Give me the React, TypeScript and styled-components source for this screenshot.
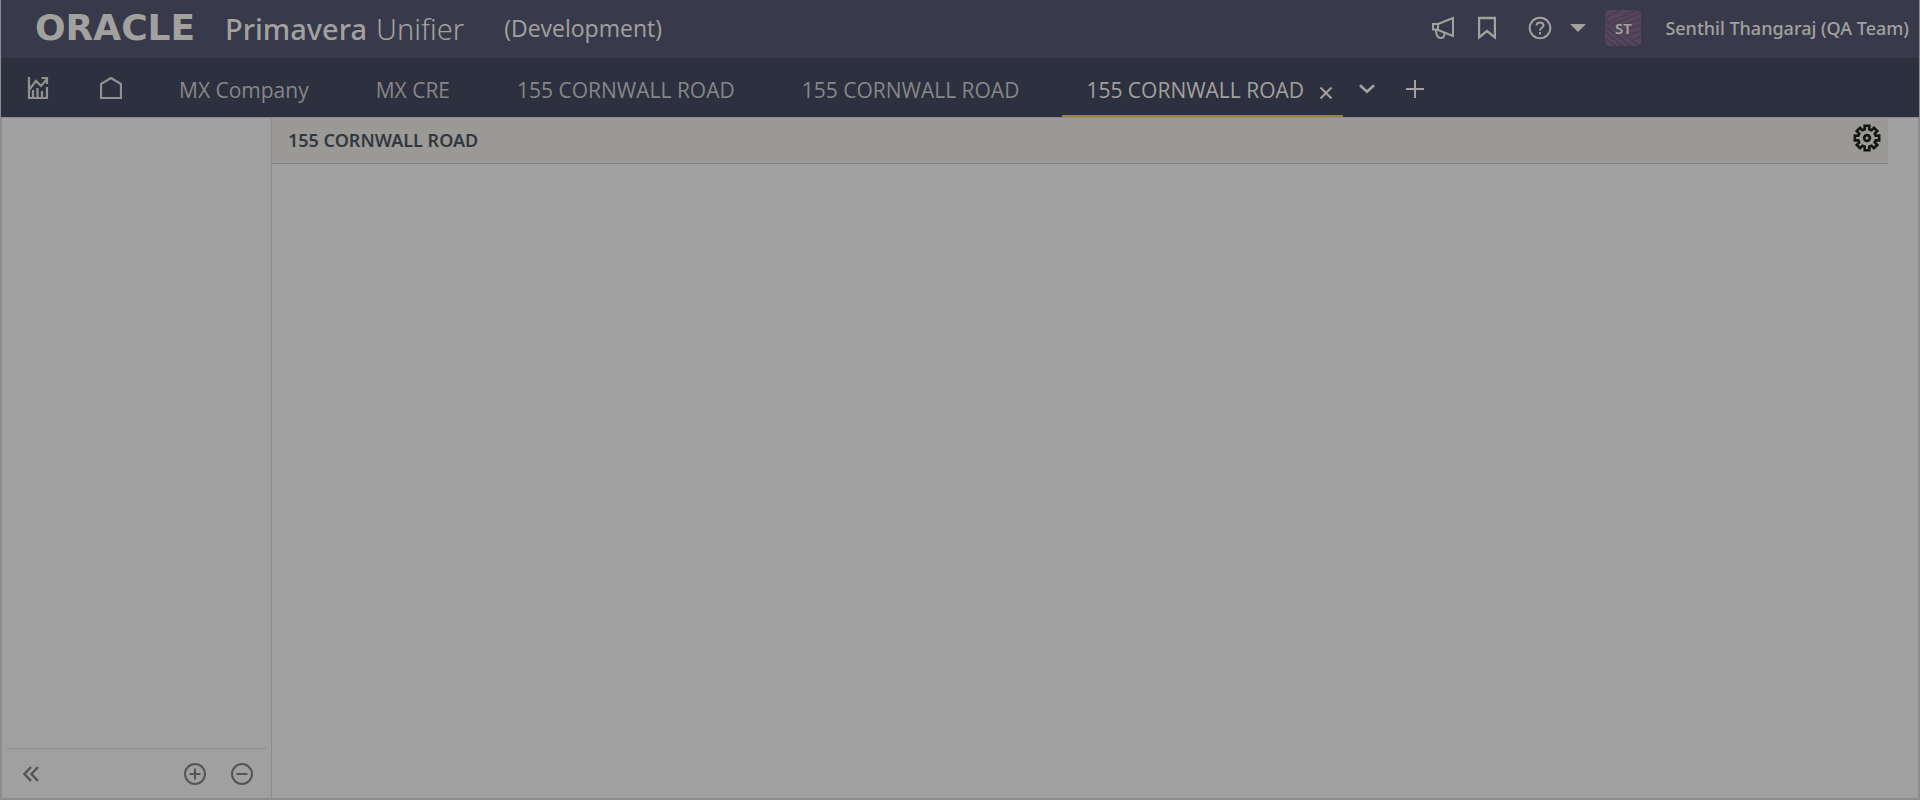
import React from "react";
import styled, { createGlobalStyle } from "styled-components";

const color = {
  frame: "#8c8c8c",
  header: "#383a4c",
  tabs: "#2d303f",
  surface: "#a0a0a0",
  titleBar: "#9b9996",
  titleLine: "#7d807e",
  line: "#8c8c8c",
  light: "#a3a19e",
  muted: "#868789",
  accent: "#9b7f45",
  ink: "#33383f",
  footerIcon: "#555555",
};

const GlobalStyle = createGlobalStyle`
  *, *::before, *::after { box-sizing: border-box; }
  body {
    margin: 0;
    background: ${color.surface};
    font-family: "Noto Sans", "Open Sans", sans-serif;
  }
`;

const Page = styled.div`
  display: flex;
  flex-direction: column;
  min-height: 100vh;
  border: 1px solid ${color.frame};
  border-top: 0;
`;

const Header = styled.header`
  display: flex;
  align-items: center;
  height: 58px;
  padding: 0 10px 2px 34px;
  background: ${color.header};
  color: ${color.light};
`;

const Brand = styled.div`
  display: flex;
  align-items: baseline;
  line-height: 40px;
  white-space: nowrap;
`;

const Wordmark = styled.span`
  width: 190px;
  font-family: "DejaVu Sans", sans-serif;
  font-size: 36px;
  font-weight: 700;
`;

const ProductName = styled.span`
  font-size: 29px;
  font-weight: 500;
`;

const ProductEdition = styled.span`
  margin-left: 9px;
  font-size: 29px;
  font-weight: 300;
`;

const Environment = styled.span`
  margin-left: 40px;
  font-family: "Open Sans", sans-serif;
  font-size: 23px;
  line-height: 32px;
`;

const HeaderTools = styled.div`
  display: flex;
  align-items: center;
  margin-left: auto;
  white-space: nowrap;
`;

const IconButton = styled.button<{ $width: number; $gap?: number }>`
  display: flex;
  align-items: center;
  justify-content: center;
  flex: none;
  width: ${(p) => p.$width}px;
  margin: 0 0 0 ${(p) => p.$gap ?? 0}px;
  padding: 0;
  border: 0;
  background: none;
  color: inherit;
  cursor: pointer;
`;

const Avatar = styled.div`
  display: grid;
  width: 36px;
  height: 36px;
  margin-left: 19px;
  border-radius: 5px;
  overflow: hidden;
  place-items: center;
  > * { grid-area: 1 / 1; }
`;

const Initials = styled.span`
  font-size: 15px;
  font-weight: 600;
  line-height: 20px;
`;

const UserName = styled.span`
  margin-left: 24px;
  font-size: 18px;
  font-weight: 500;
`;

const TabBar = styled.nav`
  display: flex;
  align-items: stretch;
  height: 59px;
  padding: 0 26px;
  background: ${color.tabs};
  color: ${color.light};
`;

const Shortcuts = styled.div`
  display: flex;
  align-items: center;
  margin-right: 33px;
  color: #92918f;
`;

const TabList = styled.div`
  display: flex;
  gap: 19px;
`;

const Tab = styled.div<{ $active?: boolean }>`
  display: flex;
  align-items: center;
  padding: 5px ${(p) => (p.$active ? 10 : 24)}px 0 24px;
  background: ${(p) =>
    p.$active ? `linear-gradient(${color.accent}, ${color.accent}) bottom / 100% 2px no-repeat` : "none"};
  color: ${(p) => (p.$active ? color.light : color.muted)};
`;

const TabLabel = styled.button`
  margin: 0;
  padding: 0;
  border: 0;
  background: none;
  color: inherit;
  font-family: "Open Sans", sans-serif;
  font-size: 21px;
  line-height: 28px;
  white-space: nowrap;
  cursor: pointer;
`;

const CloseButton = styled(IconButton)`
  padding-top: 6px;
`;

const TabAction = styled(IconButton)`
  padding-top: 2px;
`;

const Body = styled.div`
  display: flex;
  flex: 1;
  border: 1px solid ${color.frame};
  background: ${color.surface};
`;

const Sidebar = styled.aside`
  display: flex;
  flex: none;
  flex-direction: column;
  justify-content: flex-end;
  width: 270px;
  padding: 0 5px;
  border-right: 1px solid ${color.line};
`;

const SidebarFooter = styled.div`
  display: flex;
  align-items: center;
  height: 50px;
  padding: 0 13px 0 16px;
  border-top: 1px solid ${color.line};
  color: ${color.footerIcon};
`;

const Spacer = styled.div`
  flex: 1;
`;

const Main = styled.main`
  flex: 1;
  padding-right: 30px;
`;

const TitleBar = styled.div`
  display: flex;
  align-items: center;
  justify-content: space-between;
  height: 46px;
  padding: 0 7px 2px 16px;
  border-bottom: 1px solid ${color.titleLine};
  background: ${color.titleBar};
  color: ${color.ink};
`;

const Title = styled.h1`
  margin: 0;
  font-size: 18px;
  font-weight: 600;
  line-height: 24px;
`;

const GearButton = styled(IconButton)`
  padding-bottom: 4px;
  color: #141414;
`;

const Icon = styled.svg<{ $stroke?: number }>`
  display: block;
  flex: none;
  fill: none;
  stroke: currentColor;
  stroke-width: ${(p) => p.$stroke ?? 2};
`;

const gearOutline = (teeth: number, outer: number, inner: number) => {
  const step = (Math.PI * 2) / teeth;
  const point = (radius: number, angle: number) =>
    `${(14 + radius * Math.sin(angle)).toFixed(2)} ${(14 - radius * Math.cos(angle)).toFixed(2)}`;
  const points: string[] = [];
  for (let i = 0; i < teeth; i++) {
    const a = i * step;
    points.push(point(inner, a - 0.26), point(outer, a - 0.19), point(outer, a + 0.19), point(inner, a + 0.26));
  }
  return `M${points.join("L")}Z`;
};

const MegaphoneIcon = () => (
  <Icon width="24" height="24" viewBox="0 0 24 24">
    <path d="M22 2v18L7 14V8ZM7 8H2v5.500h5M5 13.500c0 5 1.500 8.500 5 8.500 2.500 0 3.500-2 3.500-5" />
  </Icon>
);

const BookmarkIcon = () => (
  <Icon width="18" height="24" viewBox="0 0 18 24" $stroke={2.4}>
    <path d="M1 2h16v19.500l-8-6.500-8 6.500Z" />
  </Icon>
);

const HelpIcon = () => (
  <Icon width="24" height="24" viewBox="0 0 24 24">
    <circle cx="12" cy="12" r="10.300" />
    <path d="M8.500 9.500C8.500 7.500 10 6.500 12 6.500s3.500 1.200 3.500 3c0 2.200-3.500 2.500-3.500 5M12 16v2.200" />
  </Icon>
);

const CaretIcon = () => (
  <Icon width="16" height="8" viewBox="0 0 16 8" $stroke={0}>
    <path d="M0 0h16L8 8Z" fill="currentColor" />
  </Icon>
);

const AvatarPattern = () => (
  <Icon width="36" height="36" viewBox="0 0 36 36">
    <path d="M0 0h36v36H0Z" fill="#57465b" stroke="none" />
    <path
      d="M0 8 16 0M0 14 36 -2M6 15 36 3M12 17 36 9M18 21 36 15M23 25 36 21M28 30 36 27M0 10 36 37M0 16 27 37M0 22 19 37M0 28 12 37"
      stroke="#4c3e51"
    />
  </Icon>
);

const ChartIcon = () => (
  <Icon width="22" height="24" viewBox="0 0 22 24" $stroke={2.2}>
    <path d="M2 1v21h19M2 14 9 5l5 5 6-7M14.500 2H20v6M6 21v-7M10.500 21v-9M15 21v-6M20 22V11" />
  </Icon>
);

const HomeIcon = () => (
  <Icon width="22" height="24" viewBox="0 0 22 24" $stroke={2.2}>
    <path d="M1 22V8l10-6 10 6v14Z" />
  </Icon>
);

const CloseIcon = () => (
  <Icon width="14" height="14" viewBox="0 0 14 14">
    <path d="m1.500 1.500 11 11M12.500 1.500l-11 11" />
  </Icon>
);

const ChevronIcon = () => (
  <Icon width="16" height="10" viewBox="0 0 16 10" $stroke={2.6}>
    <path d="m1 1.200 7 6.600 7-6.600" />
  </Icon>
);

const PlusIcon = () => (
  <Icon width="18" height="18" viewBox="0 0 18 18">
    <path d="M9 0v18M0 9h18" />
  </Icon>
);

const CollapseIcon = () => (
  <Icon width="16" height="16" viewBox="0 0 16 16" $stroke={2.4}>
    <path d="M8 1 1.500 8 8 15M15 1 8.500 8l6.500 7" />
  </Icon>
);

const CircleIcon = ({ plus }: { plus?: boolean }) => (
  <Icon width="22" height="22" viewBox="0 0 22 22">
    <circle cx="11" cy="11" r="10" />
    <path d={plus ? "M5.500 11h11M11 5.500v11" : "M5.500 11h11"} />
  </Icon>
);

const GearIcon = () => (
  <Icon width="28" height="28" viewBox="0 0 28 28" $stroke={2.6}>
    <path d={gearOutline(8, 12.4, 9)} />
    <circle cx="14" cy="14" r="2.900" />
  </Icon>
);

const tabs = ["MX Company", "MX CRE", "155 CORNWALL ROAD", "155 CORNWALL ROAD"];

export default function App() {
  return (
    <Page>
      <GlobalStyle />
      <Header>
        <Brand>
          <Wordmark>ORACLE</Wordmark>
          <ProductName>Primavera</ProductName>
          <ProductEdition>Unifier</ProductEdition>
        </Brand>
        <Environment>(Development)</Environment>
        <HeaderTools>
          <IconButton $width={24} aria-label="Announcements"><MegaphoneIcon /></IconButton>
          <IconButton $width={18} $gap={23} aria-label="Bookmarks"><BookmarkIcon /></IconButton>
          <IconButton $width={24} $gap={32} aria-label="Help"><HelpIcon /></IconButton>
          <IconButton $width={16} $gap={18} aria-label="Help menu"><CaretIcon /></IconButton>
          <Avatar>
            <AvatarPattern />
            <Initials>ST</Initials>
          </Avatar>
          <UserName>Senthil Thangaraj (QA Team)</UserName>
        </HeaderTools>
      </Header>
      <TabBar>
        <Shortcuts>
          <IconButton $width={22} aria-label="Dashboard"><ChartIcon /></IconButton>
          <IconButton $width={22} $gap={51} aria-label="Home"><HomeIcon /></IconButton>
        </Shortcuts>
        <TabList>
          {tabs.map((label, i) => (
            <Tab key={i}><TabLabel>{label}</TabLabel></Tab>
          ))}
          <Tab $active>
            <TabLabel aria-current="page">155 CORNWALL ROAD</TabLabel>
            <CloseButton $width={14} $gap={15} aria-label="Close tab"><CloseIcon /></CloseButton>
          </Tab>
        </TabList>
        <TabAction $width={16} $gap={16} aria-label="All tabs"><ChevronIcon /></TabAction>
        <TabAction $width={18} $gap={31} aria-label="Add tab"><PlusIcon /></TabAction>
      </TabBar>
      <Body>
        <Sidebar>
          <SidebarFooter>
            <IconButton $width={16} aria-label="Collapse panel"><CollapseIcon /></IconButton>
            <Spacer />
            <IconButton $width={22} aria-label="Expand all"><CircleIcon plus /></IconButton>
            <IconButton $width={22} $gap={25} aria-label="Collapse all"><CircleIcon /></IconButton>
          </SidebarFooter>
        </Sidebar>
        <Main>
          <TitleBar>
            <Title>155 CORNWALL ROAD</Title>
            <GearButton $width={28} aria-label="Settings"><GearIcon /></GearButton>
          </TitleBar>
        </Main>
      </Body>
    </Page>
  );
}
